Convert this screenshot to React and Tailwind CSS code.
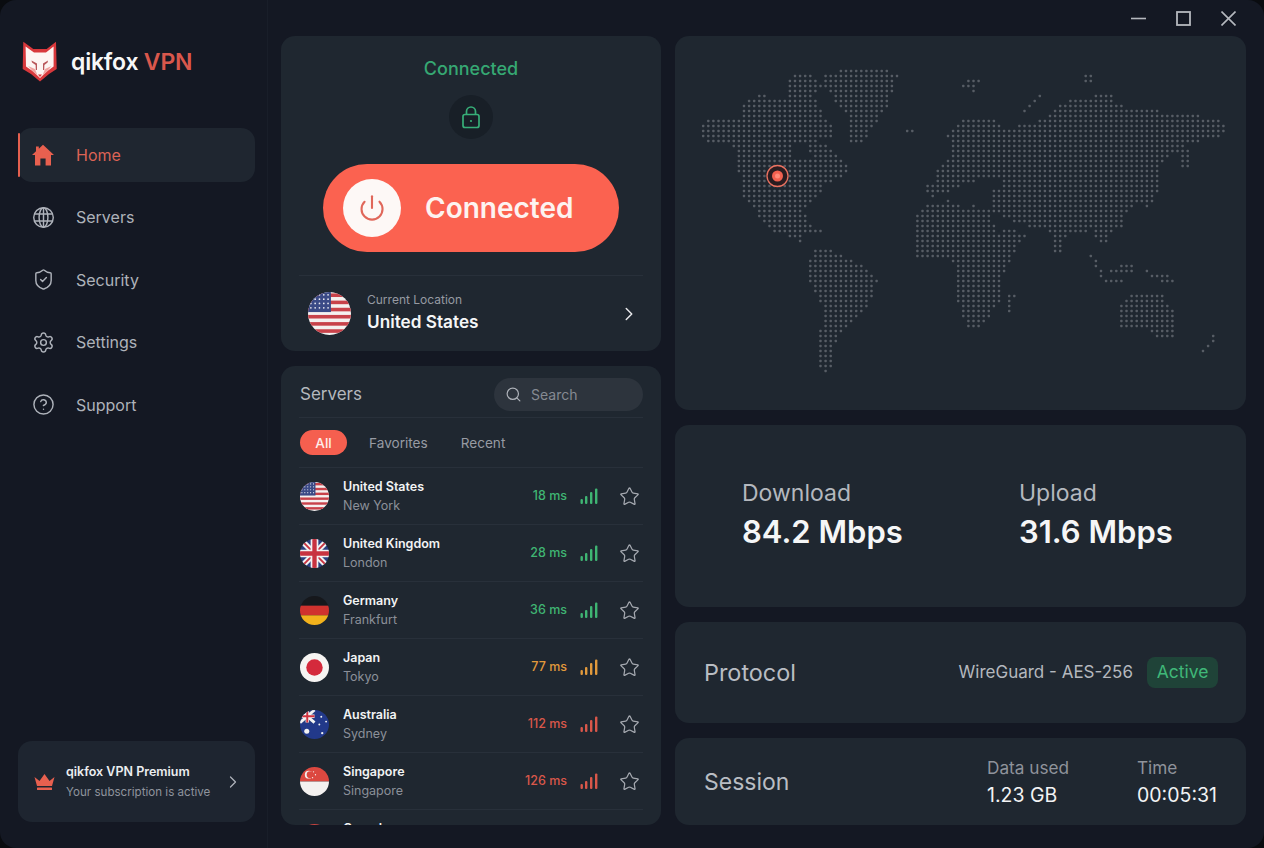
import React from "react";
import { ChevronRight, CircleHelp, Search, Settings, ShieldCheck, Star, Power } from "lucide-react";

const servers = [
  { name: "United States", city: "New York", ms: "18 ms", color: "#3fb573", flag: "us" },
  { name: "United Kingdom", city: "London", ms: "28 ms", color: "#3fb573", flag: "uk" },
  { name: "Germany", city: "Frankfurt", ms: "36 ms", color: "#3fb573", flag: "de" },
  { name: "Japan", city: "Tokyo", ms: "77 ms", color: "#e29a3c", flag: "jp" },
  { name: "Australia", city: "Sydney", ms: "112 ms", color: "#d9574a", flag: "au" },
  { name: "Singapore", city: "Singapore", ms: "126 ms", color: "#d9574a", flag: "sg" },
  { name: "Canada", city: "Toronto", ms: "140 ms", color: "#d9574a", flag: "ca" },
];

// continent outlines, measured off the reference crop
const land = [
  [[50,265],[80,232],[170,235],[170,190],[215,165],[300,175],[300,110],[345,95],[395,130],[370,170],[400,230],[430,260],[420,295],[375,300],[420,330],[460,370],[468,400],[420,425],[390,440],[385,470],[350,495],[340,520],[375,570],[410,578],[340,585],[335,610],[355,632],[300,590],[250,575],[210,520],[170,460],[160,380],[150,320],[90,310],[55,300]],
  [[400,100],[520,80],[600,100],[570,200],[500,310],[465,310],[460,230],[395,140]],
  [[375,620],[410,625],[470,655],[548,715],[520,790],[470,850],[430,900],[410,1005],[385,990],[378,920],[395,810],[352,710],[355,670]],
  [[610,265],[645,265],[640,285],[615,285]],
  [[640,540],[680,490],[750,480],[850,510],[870,570],[960,575],[925,630],[880,720],[880,780],[830,865],[790,865],[760,770],[750,660],[650,650],[640,600]],
  [[900,770],[922,755],[915,815],[898,815]],
  [[670,440],[700,430],[700,390],[735,370],[740,320],[735,290],[770,240],[850,235],[900,265],[1000,240],[1050,190],[1100,175],[1190,160],[1200,195],[1300,210],[1480,235],[1515,265],[1480,295],[1400,310],[1320,370],[1325,440],[1290,490],[1230,500],[1225,560],[1180,580],[1170,625],[1130,570],[1060,590],[1050,640],[1030,640],[1015,570],[960,560],[900,540],[850,510],[850,450],[780,430],[740,460],[700,470],[670,465]],
  [[1380,325],[1410,320],[1400,380],[1382,378]],
  [[1200,800],[1250,760],[1320,755],[1365,820],[1360,890],[1310,890],[1280,860],[1210,865]],
  [[1125,645],[1150,660],[1170,715],[1150,705]],
  [[1180,680],[1250,675],[1255,700],[1185,700]],
  [[1165,720],[1250,725],[1250,735],[1170,730]],
  [[1280,690],[1370,715],[1350,735],[1290,710]],
  [[1425,945],[1465,885],[1472,900],[1440,945]],
  [[760,128],[825,118],[810,155],[775,150]],
  [[1105,108],[1130,108],[1150,135],[1120,130]],
  [[940,210],[1000,158],[1005,165],[950,215]],
  [[1270,490],[1315,450],[1310,480],[1275,505]],
];
const holes = [
  [[820,420],[880,420],[880,450],[820,450]],
  [[740,468],[800,470],[810,510],[750,490]],
  [[300,305],[355,305],[360,350],[310,350]],
  [[870,530],[900,545],[885,590],[865,570]],
];

const inside = (x, y, poly) => {
  let hit = false;
  for (let i = 0, j = poly.length - 1; i < poly.length; j = i++) {
    const [xi, yi] = poly[i];
    const [xj, yj] = poly[j];
    if (yi > y !== yj > y && x < ((xj - xi) * (y - yi)) / (yj - yi) + xi) hit = !hit;
  }
  return hit;
};

const mapDots = [];
for (let py = 20; py < 350; py += 5) {
  for (let px = 18; px < 560; px += 5.1) {
    const zx = (px - 5) * 2.75;
    const zy = (py - 4) * 3;
    if (land.some((p) => inside(zx, zy, p)) && !holes.some((p) => inside(zx, zy, p))) mapDots.push([px, py]);
  }
}

const WorldMap = () => (
  <svg viewBox="0 0 571 374" className="block w-full h-full">
    {mapDots.map(([x, y], i) => (
      <rect key={i} x={x - 1.2} y={y - 1.2} width="2.4" height="2.4" rx="0.7" fill="#575d65" />
    ))}
    <circle cx="102.5" cy="140" r="10.5" fill="#2a1c20" stroke="#e8705f" strokeWidth="1.3" />
    <circle cx="102.5" cy="140" r="5.5" fill="#f2604f" />
    <circle cx="102.5" cy="140" r="2.5" fill="#ff8a78" />
  </svg>
);

const Flag = ({ kind, size }) => {
  const id = `clip-${kind}-${size}`;
  return (
    <svg width={size} height={size} viewBox="0 0 30 30" className="shrink-0">
      <clipPath id={id}><circle cx="15" cy="15" r="15" /></clipPath>
      <g clipPath={`url(#${id})`}>
        {kind === "us" && (
          <>
            <rect width="30" height="30" fill="#f4f1f0" />
            {[1, 6, 11, 16, 21, 26].map((y) => <rect key={y} y={y} width="30" height="2.5" fill="#c8424a" />)}
            <rect width="16" height="14" fill="#3b4a86" />
            {[2, 5, 8, 11].map((y) => [2, 5, 8, 11, 14].map((x) => <circle key={x + "-" + y} cx={x} cy={y} r="0.6" fill="#e8e8f0" />))}
          </>
        )}
        {kind === "uk" && (
          <>
            <rect width="30" height="30" fill="#2b3f7e" />
            <path d="M0 0L30 30M30 0L0 30" stroke="#f2f2f2" strokeWidth="6" />
            <path d="M0 0L30 30M30 0L0 30" stroke="#c8323f" strokeWidth="2" />
            <path d="M15 0V30M0 15H30" stroke="#f2f2f2" strokeWidth="8" />
            <path d="M15 0V30M0 15H30" stroke="#c8323f" strokeWidth="4.5" />
          </>
        )}
        {kind === "de" && (
          <>
            <rect width="30" height="10" fill="#16181c" />
            <rect y="10" width="30" height="10" fill="#d0322e" />
            <rect y="20" width="30" height="10" fill="#f2b21c" />
          </>
        )}
        {kind === "jp" && (
          <>
            <rect width="30" height="30" fill="#f6f4f2" />
            <circle cx="15" cy="15" r="8.5" fill="#d42a3c" />
          </>
        )}
        {kind === "au" && (
          <>
            <rect width="30" height="30" fill="#22398a" />
            <rect width="15" height="13" fill="#2b3f7e" />
            <path d="M0 0L15 13M15 0L0 13" stroke="#f2f2f2" strokeWidth="3" />
            <path d="M7.5 0V13M0 6.5H15" stroke="#f2f2f2" strokeWidth="3.5" />
            <path d="M7.5 0V13M0 6.5H15" stroke="#d0323f" strokeWidth="2" />
            <circle cx="7" cy="22" r="2.6" fill="#f2f2f2" />
            <circle cx="22" cy="7" r="1" fill="#f2f2f2" />
            <circle cx="27" cy="12" r="1" fill="#f2f2f2" />
            <circle cx="20" cy="15" r="1" fill="#f2f2f2" />
            <circle cx="23" cy="24" r="1.2" fill="#f2f2f2" />
          </>
        )}
        {kind === "sg" && (
          <>
            <rect width="30" height="15" fill="#dc4840" />
            <rect y="15" width="30" height="15" fill="#f4f1f0" />
            <circle cx="9" cy="8" r="4" fill="#f4f1f0" />
            <circle cx="10.5" cy="8" r="3.6" fill="#dc4840" />
            <circle cx="14" cy="5" r="0.7" fill="#f4f1f0" />
            <circle cx="16" cy="8" r="0.7" fill="#f4f1f0" />
            <circle cx="13" cy="11" r="0.7" fill="#f4f1f0" />
          </>
        )}
        {kind === "ca" && <rect width="30" height="30" fill="#c8423f" />}
      </g>
    </svg>
  );
};

const Signal = ({ color }) => (
  <svg width="18" height="16" viewBox="0 0 18 16" className="shrink-0">
    <rect x="0.5" y="11" width="2.4" height="5" rx="1" fill={color} />
    <rect x="5" y="8" width="2.4" height="8" rx="1" fill={color} />
    <rect x="10" y="4" width="2.4" height="12" rx="1" fill={color} />
    <rect x="15" y="0.5" width="2.4" height="15.5" rx="1" fill={color} />
  </svg>
);

const FoxLogo = () => (
  <svg width="36" height="42" viewBox="0 0 36 42" className="shrink-0">
    <path d="M1.3 .7L11.3 8H24.7L34 .7L34.7 28L27 33L18 40.5L9 33L.7 28Z" fill="#d8383c" />
    <path d="M3.6 5.5L12 11.5H24L31.6 5.5L31.6 25.5L25.5 30L18 37L10.5 30L4 25.5Z" fill="#fdf4f2" />
    <path d="M6 25L13 28L15.5 34.5L18 36.5L20.5 34.5L23 28L29.5 25L25 30.5L18 37L11 30.5Z" fill="#f0a3a0" />
    <path d="M9.5 19.5L15 22.5L15 29L13.8 29L13.6 24L10 21.5ZM26 19.5L21 22.5L21 29L22.2 29L22.4 24L25.6 21.5Z" fill="#b8565a" />
    <path d="M16 33.5H20L18 36Z" fill="#d8383c" />
  </svg>
);

const GlobeIcon = () => (
  <svg width="23" height="23" viewBox="0 0 24 24" fill="none" stroke="currentColor" strokeWidth="1.5">
    <circle cx="12" cy="12" r="10.2" />
    <ellipse cx="12" cy="12" rx="4.6" ry="10.2" />
    <path d="M12 1.8V22.2M2.6 8.4H21.4M2.6 15.6H21.4" />
  </svg>
);

const nav = [
  { label: "Servers", icon: <GlobeIcon /> },
  { label: "Security", icon: <ShieldCheck size={23} strokeWidth={1.5} /> },
  { label: "Settings", icon: <Settings size={23} strokeWidth={1.5} /> },
  { label: "Support", icon: <CircleHelp size={23} strokeWidth={1.5} /> },
];

const App = () => {
  return (
    <div className="w-[1264px] h-[848px] bg-[#0a0c10] overflow-hidden" style={{ fontFamily: "Inter, 'Noto Sans', sans-serif" }}>
      <div className="w-full h-full flex rounded-[16px] bg-[#141823]">
        {/* Sidebar */}
        <aside className="w-[268px] shrink-0 border-r border-[#191e29] pl-[18px] pr-[12px] pt-[41px] pb-[26px] flex flex-col">
          <div className="flex items-center pl-[4px] h-[42px]">
            <FoxLogo />
            <div className="ml-[13px] text-[23px] leading-none font-semibold text-[#f7f7f7] tracking-[-0.2px]">
              qikfox <span className="text-[#d9574c]">VPN</span>
            </div>
          </div>
          <nav className="mt-[45px] flex flex-col">
            <div className="h-[54px] rounded-[14px] bg-[#1f2630] flex items-center">
              <span className="w-[2px] h-[44px] rounded-full bg-[#e5604f]" />
              <svg width="24" height="24" viewBox="0 0 24 24" fill="#e8604f" className="ml-[11px]">
                <path d="M12 1.8L23 12H20V22.5H14.6V15.5H9.4V22.5H4V12H1L5 8.3V3.5H7.8V5.7Z" />
              </svg>
              <span className="ml-[21px] text-[16px] text-[#dc6355]">Home</span>
            </div>
            <div className="mt-[4px]">
              {nav.map((item) => (
                <div key={item.label} className="h-[62.5px] flex items-center pl-[14px] text-[#aeb2ba]">
                  <span className="w-[23px] flex justify-center">{item.icon}</span>
                  <span className="ml-[21px] text-[16px]">{item.label}</span>
                </div>
              ))}
            </div>
          </nav>
          <div className="mt-auto h-[81px] rounded-[14px] bg-[#1e2530] flex items-center pl-[15px] pr-[12px]">
            <svg width="23" height="18" viewBox="0 0 22 18" fill="#e8604f" className="shrink-0">
              <path d="M1 4L6 8L11 1L16 8L21 4L18.5 13H3.5Z" />
              <rect x="3.5" y="14.5" width="15" height="2.5" rx="0.5" />
            </svg>
            <div className="ml-[10px] flex-1">
              <div className="text-[12.5px] leading-[20px] font-semibold text-[#eceef0]">qikfox VPN Premium</div>
              <div className="text-[11.6px] leading-[20px] text-[#8f949d]">Your subscription is active</div>
            </div>
            <ChevronRight size={20} strokeWidth={1.5} className="text-[#aeb2ba]" />
          </div>
        </aside>

        {/* Main */}
        <div className="flex-1 min-w-0 flex flex-col">
          <header className="h-[36px] shrink-0 flex justify-end items-center pr-[28px] text-[#b5b8be] gap-[30px]">
            <svg width="15" height="15" viewBox="0 0 15 15" fill="none" stroke="currentColor" strokeWidth="1.6"><path d="M0 7.5H15" /></svg>
            <svg width="15" height="15" viewBox="0 0 15 15" fill="none" stroke="currentColor" strokeWidth="1.8"><rect x="1" y="1" width="13" height="13" /></svg>
            <svg width="15" height="15" viewBox="0 0 15 15" fill="none" stroke="currentColor" strokeWidth="1.6"><path d="M.5 .5L14.5 14.5M14.5 .5L.5 14.5" /></svg>
          </header>
          <div className="flex-1 flex pl-[13px] pr-[18px] pb-[23px] gap-[14px] min-h-0">
            {/* Center column */}
            <div className="w-[380px] shrink-0 flex flex-col gap-[15px]">
              <section className="h-[315px] rounded-[14px] bg-[#1f2730] px-[18px] flex flex-col items-center">
                <div className="mt-[21px] text-[18px] leading-[24px] font-medium text-[#36a873]">Connected</div>
                <div className="mt-[14px] w-[44px] h-[44px] rounded-full bg-[#181f27] flex items-center justify-center">
                  <svg width="20" height="24" viewBox="0 0 20 24" fill="none" stroke="#37ae78" strokeWidth="1.7">
                    <rect x="2" y="9.5" width="16" height="13" rx="2" />
                    <path d="M5.5 9.5V6.5a4.5 4.5 0 0 1 9 0v3" />
                    <circle cx="10" cy="16" r="1.1" fill="#37ae78" stroke="none" />
                  </svg>
                </div>
                <div className="mt-[25px] w-[296px] h-[88px] rounded-full bg-[#fb6250] flex items-center pl-[20px]">
                  <div className="w-[58px] h-[58px] rounded-full bg-[#fdf8f6] flex items-center justify-center">
                    <Power size={28} strokeWidth={1.8} className="text-[#e0675a]" />
                  </div>
                  <span className="ml-[24px] text-[28px] font-semibold text-[#fdf3f0]">Connected</span>
                </div>
                <div className="mt-[23px] w-full border-t border-[#28303a] flex-1 flex items-center pl-[9px] pr-[3px]">
                  <Flag kind="us" size={43} />
                  <div className="ml-[16px] flex-1 pb-[3px]">
                    <div className="text-[12px] leading-[20px] text-[#969aa2]">Current Location</div>
                    <div className="text-[17.2px] leading-[24px] font-semibold text-[#f5f6f7]">United States</div>
                  </div>
                  <ChevronRight size={22} strokeWidth={1.6} className="text-[#e8e9eb]" />
                </div>
              </section>

              <section className="flex-1 min-h-0 overflow-hidden rounded-[14px] bg-[#1f2730] px-[18px]">
                <div className="h-[52px] flex items-center justify-between border-b border-[#28303a] pt-[5px]">
                  <span className="text-[17px] text-[#b4b8be] ml-[1px] pt-[1px]">Servers</span>
                  <div className="w-[149px] h-[33px] rounded-full bg-[#2d343d] flex items-center pl-[11px]">
                    <Search size={17} strokeWidth={1.7} className="text-[#adb1b8]" />
                    <span className="ml-[9px] text-[14px] text-[#858a92]">Search</span>
                  </div>
                </div>
                <div className="h-[50px] flex items-center border-b border-[#28303a] text-[13.6px] text-[#979ba3]">
                  <span className="ml-[1px] w-[47px] h-[25px] rounded-full bg-[#f55f4f] text-[#fdeeeb] flex items-center justify-center font-medium pt-[1px]">All</span>
                  <span className="ml-[22px] pt-[1px]">Favorites</span>
                  <span className="ml-[33px] pt-[1px]">Recent</span>
                </div>
                {servers.map((s) => (
                  <div key={s.name} className="h-[57px] flex items-center border-b border-[#28303a]">
                    <span className="ml-[1px]"><Flag kind={s.flag} size={29} /></span>
                    <div className="ml-[14px] flex-1">
                      <div className="text-[12.5px] leading-[19px] font-semibold text-[#f2f3f4]">{s.name}</div>
                      <div className="text-[12.5px] leading-[19px] text-[#8b9099]">{s.city}</div>
                    </div>
                    <span className="text-[12.5px] font-medium" style={{ color: s.color }}>{s.ms}</span>
                    <span className="ml-[13px]"><Signal color={s.color} /></span>
                    <Star size={21} strokeWidth={1.4} className="ml-[21px] mr-[3px] text-[#a5a9b0]" />
                  </div>
                ))}
              </section>
            </div>

            {/* Right column */}
            <div className="flex-1 min-w-0 flex flex-col gap-[15px]">
              <section className="h-[374px] rounded-[14px] bg-[#1f2730] overflow-hidden">
                <WorldMap />
              </section>
              <section className="h-[182px] rounded-[14px] bg-[#1f2730] flex items-center pl-[67px]">
                <div className="w-[277px]">
                  <div className="text-[23px] leading-[32px] text-[#b4b8be]">Download</div>
                  <div className="text-[31px] leading-[46px] font-semibold text-[#f5f6f7]">84.2 Mbps</div>
                </div>
                <div>
                  <div className="text-[23px] leading-[32px] text-[#b4b8be]">Upload</div>
                  <div className="text-[31px] leading-[46px] font-semibold text-[#f5f6f7]">31.6 Mbps</div>
                </div>
              </section>
              <section className="h-[101px] rounded-[14px] bg-[#1f2730] flex items-center justify-between pl-[29px] pr-[28px]">
                <span className="text-[23.4px] text-[#b9bdc3]">Protocol</span>
                <div className="flex items-center">
                  <span className="text-[17px] text-[#b4b8be]">WireGuard - AES-256</span>
                  <span className="ml-[14px] w-[71px] h-[31px] rounded-[8px] bg-[#1f4338] text-[#3fb878] text-[17.5px] flex items-center justify-center">Active</span>
                </div>
              </section>
              <section className="h-[87px] rounded-[14px] bg-[#1f2730] flex items-center pl-[29px] pr-[29px]">
                <span className="text-[23px] text-[#b9bdc3] flex-1 pt-[1px]">Session</span>
                <div className="w-[150px]">
                  <div className="text-[17.2px] leading-[26px] text-[#8f939b]">Data used</div>
                  <div className="text-[19.5px] leading-[28px] text-[#f2f3f4]">1.23 GB</div>
                </div>
                <div>
                  <div className="text-[17.2px] leading-[26px] text-[#8f939b]">Time</div>
                  <div className="text-[19.5px] leading-[28px] text-[#f2f3f4]">00:05:31</div>
                </div>
              </section>
            </div>
          </div>
        </div>
      </div>
    </div>
  );
};

export default App;
